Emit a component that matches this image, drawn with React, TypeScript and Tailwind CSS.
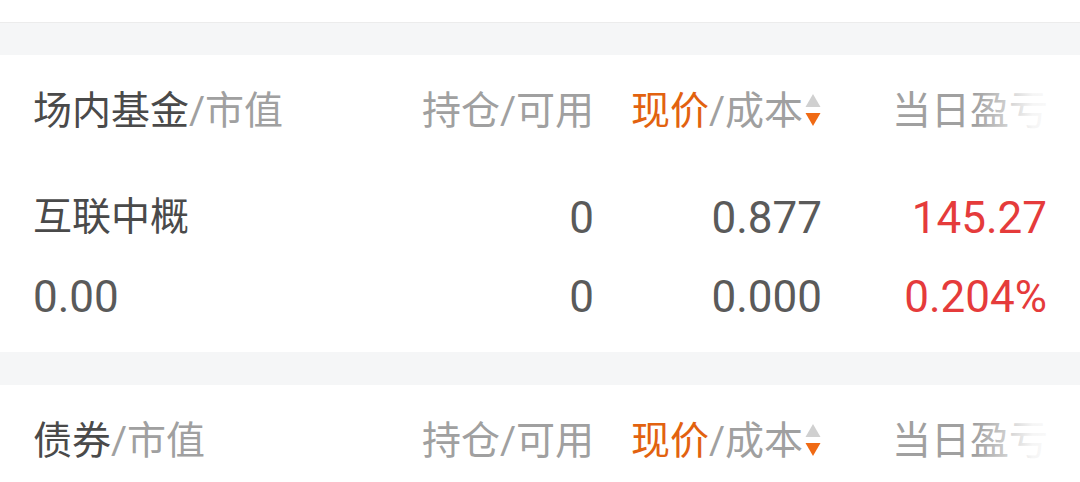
import React from 'react'

const FONT = { fontFamily: 'Roboto, "Noto Sans CJK SC", sans-serif' }

function SortArrows() {
  return (
    <svg width="18" height="38" viewBox="0 0 18 38" className="ml-[1px] shrink-0">
      <path d="M9 2 L16.5 15 L1.5 15 Z" fill="#d0d0d0" />
      <path d="M1.5 21 L16.5 21 L9 34 Z" fill="#f06a14" />
    </svg>
  )
}

function HeaderRow({ title }: { title: string }) {
  return (
    <div className="relative grid h-[112px] grid-cols-[1fr_228px_228px_225px] items-center px-[33px] text-[39px] leading-none text-[#a0a0a0]">
      <div>
        <span className="text-[#4a4a4a]">{title}</span>/市值
      </div>
      <div className="text-right">持仓/可用</div>
      <div className="flex items-center justify-end">
        <span className="text-[#e2620f]">现价</span>/成本
        <SortArrows />
      </div>
      <div className="whitespace-nowrap pl-[70px]">当日盈亏</div>
      <div className="pointer-events-none absolute right-0 top-0 h-full w-[105px] bg-gradient-to-r from-white/0 via-white/90 via-55% to-white" />
    </div>
  )
}

function DataRow({ cells }: { cells: string[] }) {
  const [name, hold, price, pnl] = cells
  const isNumber = /^[\d.%-]+$/.test(name)
  return (
    <div className="grid h-[79px] grid-cols-[1fr_228px_228px_225px] items-center px-[33px] leading-none">
      <div className={isNumber ? 'text-[44px] text-[#5a5a5a]' : 'text-[39px] text-[#4a4a4a]'}>{name}</div>
      <div className="text-right text-[44px] text-[#5a5a5a]">{hold}</div>
      <div className="text-right text-[44px] text-[#5a5a5a]">{price}</div>
      <div className="text-right text-[44px] text-[#e53b3b]">{pnl}</div>
    </div>
  )
}

export default function App() {
  return (
    <div className="h-[482px] w-[1080px] overflow-hidden bg-white" style={FONT}>
      <div className="h-[22px] bg-white" />
      <div className="h-[33px] border-t border-[#ececec] bg-[#f5f6f7]" />

      <div className="bg-white pb-[16px]">
        <HeaderRow title="场内基金" />
        <div className="pt-[11px]">
          <DataRow cells={['互联中概', '0', '0.877', '145.27']} />
          <DataRow cells={['0.00', '0', '0.000', '0.204%']} />
        </div>
      </div>

      <div className="h-[33px] bg-[#f5f6f7]" />

      <div className="bg-white">
        <HeaderRow title="债券" />
      </div>
    </div>
  )
}
